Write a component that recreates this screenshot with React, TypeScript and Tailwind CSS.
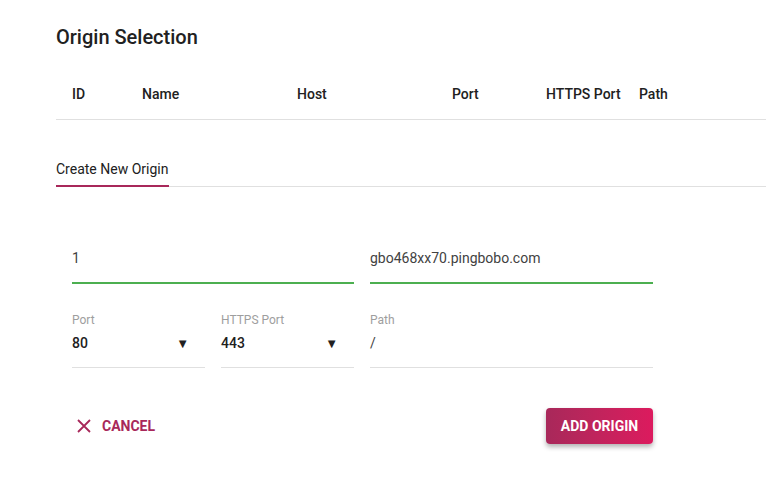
import React from "react";

const cols = [
  { label: "ID", w: "w-[70px]" },
  { label: "Name", w: "w-[155px]" },
  { label: "Host", w: "w-[155px]" },
  { label: "Port", w: "w-[94px]" },
  { label: "HTTPS Port", w: "w-[93px]" },
  { label: "Path", w: "flex-1" },
];

function Select({ label, value }: { label: string; value: string }) {
  return (
    <div className="w-[133px] h-[57px] border-b border-[#e0e0e0] flex flex-col">
      <span className="text-[12px] leading-[14px] text-[#9e9e9e] mt-[2px]">{label}</span>
      <div className="flex items-center justify-between mt-[6px]">
        <span className="text-[14px] font-medium text-[#212121]">{value}</span>
        <span className="text-[13px] text-[#212121] mr-[16px]">▼</span>
      </div>
    </div>
  );
}

export default function App() {
  return (
    <div className="bg-white min-h-[482px] pl-[56px] text-[#212121]" style={{ fontFamily: "Roboto, sans-serif" }}>
      <h1 className="text-[20px] font-medium leading-[28px] pt-[23px]">Origin Selection</h1>

      <div className="mt-[19px] h-[50px] flex items-center px-4 border-b border-[#e0e0e0]">
        {cols.map((c) => (
          <div key={c.label} className={`${c.w} text-[14px] font-medium`}>
            {c.label}
          </div>
        ))}
      </div>

      <div className="mt-[31px] border-b border-[#e0e0e0] flex">
        <div className="w-[113px] h-[36px] flex items-start border-b-2 border-[#a8285a] -mb-px">
          <span className="text-[14px] leading-[16px] mt-[10px]">Create New Origin</span>
        </div>
      </div>

      <div className="px-4 mt-[51px] flex gap-4">
        <div className="w-[282px] h-[46px] border-b-2 border-[#4caf50] flex items-start">
          <span className="text-[14px] leading-[16px] mt-[12px] text-[#424242]">1</span>
        </div>
        <div className="w-[283px] h-[46px] border-b-2 border-[#4caf50] flex items-start">
          <span className="text-[14px] leading-[16px] mt-[12px] text-[#424242]">gbo468xx70.pingbobo.com</span>
        </div>
      </div>

      <div className="px-4 mt-[27px] flex gap-4">
        <Select label="Port" value="80" />
        <Select label="HTTPS Port" value="443" />
        <div className="w-[283px] h-[57px] border-b border-[#e0e0e0] flex flex-col">
          <span className="text-[12px] leading-[14px] text-[#9e9e9e] mt-[2px]">Path</span>
          <span className="text-[14px] text-[#424242] mt-[6px]">/</span>
        </div>
      </div>

      <div className="px-4 mt-[40px] flex items-center w-[613px] justify-between">
        <button className="flex items-center gap-[10px] h-[36px] pl-[4px] text-[#a8285a] text-[14px] font-bold">
          <svg width="16" height="16" viewBox="0 0 16 16" fill="none" stroke="#a8285a" strokeWidth="1.8">
            <path d="M2 2 L14 14 M14 2 L2 14" />
          </svg>
          CANCEL
        </button>
        <button className="h-[36px] w-[107px] rounded-[4px] bg-gradient-to-r from-[#a8285a] to-[#dc1a5e] text-white text-[14px] font-bold shadow-[0_3px_5px_rgba(0,0,0,0.3)]">
          ADD ORIGIN
        </button>
      </div>
    </div>
  );
}
